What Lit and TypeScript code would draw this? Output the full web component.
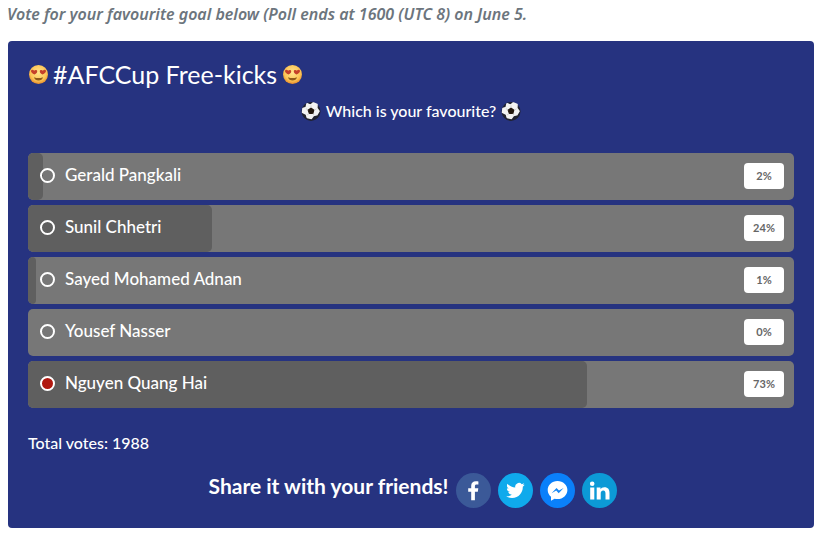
import { LitElement, html, css, svg } from "lit";
import { customElement, state } from "lit/decorators.js";

interface Option {
  name: string;
  percent: number;
}

const OPTIONS: Option[] = [
  { name: "Gerald Pangkali", percent: 2 },
  { name: "Sunil Chhetri", percent: 24 },
  { name: "Sayed Mohamed Adnan", percent: 1 },
  { name: "Yousef Nasser", percent: 0 },
  { name: "Nguyen Quang Hai", percent: 73 },
];

const heartEyes = html`<svg class="emoji" viewBox="0 0 20 20" aria-hidden="true">
  <defs>
    <radialGradient id="face" cx="50%" cy="40%" r="60%">
      <stop offset="0" stop-color="#ffe58e" />
      <stop offset="0.7" stop-color="#fcc556" />
      <stop offset="1" stop-color="#e88b2a" />
    </radialGradient>
  </defs>
  <circle cx="10.5" cy="10.5" r="9.5" fill="url(#face)" />
  <path d="M6.4 10.6 C4.4 9.4 2.7 8.2 3 6.8 C3.4 5.5 5.4 5.6 6.1 6.8 C7.2 5.6 9.2 6 9.2 7.4 C9.2 8.8 7.8 9.8 6.4 10.6Z" fill="#c5402a" />
  <path d="M14.6 10.6 C16.6 9.4 18.3 8.2 18 6.8 C17.6 5.5 15.6 5.6 14.9 6.8 C13.8 5.6 11.8 6 11.8 7.4 C11.8 8.8 13.2 9.8 14.6 10.6Z" fill="#c5402a" />
  <path d="M6 13.2 Q10.5 15 15 13.2 Q14 16.4 10.5 16.4 Q7 16.4 6 13.2Z" fill="#8f5a1a" />
</svg>`;

const ball = html`<svg class="emoji" viewBox="0 0 20 20" aria-hidden="true">
  <circle cx="10" cy="10.4" r="9.5" fill="#20222f" />
  <path
    d="M9.6 4.2 L12.4 2 L16 3.6 L15.8 7.2 L18 10.2 L15.8 13.8 L12.6 14.4 L10.4 17.4 L6.2 16.4 L5.4 13.4 L1.6 11.4 L2 7.4 L5.2 6.4 L6 2.8Z"
    fill="#f3f3f3"
    stroke="#f3f3f3"
    stroke-width="1.6"
    stroke-linejoin="round"
  />
  <path d="M10 7.4 L12.6 9.2 L11.8 12.2 L8.4 12.2 L7.4 9.2Z" fill="#24190f" stroke="#24190f" stroke-width="1.4" stroke-linejoin="round" />
  <path d="M10 7 V4.4 M13 9.2 L15.4 8 M12 12.4 L13 14.2 M8.2 12.4 L6 14 M7.2 9.2 L4.8 7.4" stroke="#b9b9b9" stroke-width="0.6" fill="none" />
</svg>`;

const NETWORKS = [
  {
    id: "facebook",
    label: "Facebook",
    glyph: svg`<path d="M18.9 27.2V18.7H21.8L22.3 15.2H18.9V13.1C18.9 12 19.4 11.4 20.7 11.4H22.4V8.4C21.9 8.3 20.9 8.2 19.9 8.2C17 8.2 15.2 9.8 15.2 12.7V15.2H12.2V18.7H15.2V27.2Z" fill="#fff"/>`,
  },
  {
    id: "twitter",
    label: "Twitter",
    glyph: svg`<path transform="translate(8.2 8.2) scale(.77)" d="M23.95 4.57a10 10 0 0 1-2.82.77 4.96 4.96 0 0 0 2.16-2.72c-.95.55-2 .96-3.13 1.18a4.92 4.92 0 0 0-8.38 4.48C7.69 8.1 4.07 6.13 1.64 3.16a4.82 4.82 0 0 0-.67 2.48c0 1.71.87 3.21 2.19 4.1a4.9 4.9 0 0 1-2.23-.62v.06a4.92 4.92 0 0 0 3.95 4.83 5 5 0 0 1-2.21.08 4.94 4.94 0 0 0 4.6 3.42A9.87 9.87 0 0 1 0 19.54a14 14 0 0 0 7.55 2.21c9.05 0 14-7.5 14-13.98 0-.21 0-.42-.02-.63a9.94 9.94 0 0 0 2.42-2.57z" fill="#fff"/>`,
  },
  {
    id: "messenger",
    label: "Messenger",
    glyph: svg`<path d="M17.5 8C11.9 8 7.7 12 7.7 17C7.7 19.8 9 22.2 11 23.8V27.8L14.6 25.7C15.5 26 16.5 26.1 17.5 26.1C23.1 26.1 27.4 22.1 27.4 17C27.4 12 23.1 8 17.5 8Z" fill="#fff"/><path d="M11.6 20.2L16.5 15L19 17.6L23.6 15L18.7 20.2L16.2 17.6Z" fill="#1587f5"/>`,
  },
  {
    id: "linkedin",
    label: "LinkedIn",
    glyph: svg`<path d="M8.2 14.6H12.3V26.5H8.2ZM10.2 8.5A2.3 2.3 0 1 1 10.2 13.1A2.3 2.3 0 1 1 10.2 8.5ZM14.7 14.6H18.5V16.2C19.2 15.1 20.5 14.3 22.3 14.3C26.2 14.3 27.5 16.6 27.5 20.1V26.5H23.5V20.8C23.5 19 23.1 17.6 21.2 17.6C19.4 17.6 18.7 18.9 18.7 20.7V26.5H14.7Z" fill="#fff"/>`,
  },
];

@customElement("app-root")
export class AppRoot extends LitElement {
  @state() private selected = 4;

  static styles = css`
    :host {
      display: block;
      font-family: Lato, "Liberation Sans", sans-serif;
      font-weight: 500;
      color: #fff;
    }
    * {
      box-sizing: border-box;
    }
    .intro {
      margin: 0;
      padding: 4px 7px 17px;
      font: italic 600 16px/20px "Noto Sans", sans-serif;
      color: #6c757d;
    }
    .card {
      margin: 0 10px 9px 8px;
      padding: 20px;
      border-radius: 4px;
      background: #263380;
    }
    .title {
      display: flex;
      align-items: center;
      gap: 5px;
      margin: 0;
      font-size: 25px;
      font-weight: 400;
      line-height: 26px;
    }
    .question {
      display: flex;
      align-items: center;
      justify-content: center;
      gap: 5px;
      margin: 14px 0 32px;
      font-size: 16px;
      line-height: 20px;
    }
    .emoji {
      width: 20px;
      height: 20px;
      flex: none;
    }
    .options {
      display: grid;
      gap: 5px;
      margin: 0;
      padding: 0;
      border: 0;
    }
    .option {
      position: relative;
      display: flex;
      align-items: center;
      gap: 10px;
      height: 47px;
      padding: 0 10px 2px 12px;
      border-radius: 5px;
      background: #777;
      overflow: hidden;
      cursor: pointer;
    }
    .fill {
      position: absolute;
      inset: 0 auto 0 0;
      border-radius: 5px;
      background: #5f5f5f;
    }
    .radio {
      appearance: none;
      position: relative;
      flex: none;
      width: 15px;
      height: 15px;
      margin: 0;
      border: 2px solid #fff;
      border-radius: 50%;
    }
    .radio:checked {
      background: #b01810;
    }
    .name {
      position: relative;
      flex: 1;
      padding-bottom: 2px;
      font-size: 17px;
      line-height: 22px;
    }
    .percent {
      position: relative;
      width: 40px;
      border-radius: 4px;
      background: #fff;
      color: #666;
      font-size: 11px;
      font-weight: 700;
      line-height: 26px;
      text-align: center;
    }
    .total {
      margin: 25px 0 20px;
      font-size: 16px;
      line-height: 20px;
    }
    .share {
      display: flex;
      flex-wrap: wrap;
      align-items: center;
      justify-content: center;
      gap: 8px;
      padding-left: 4px;
    }
    .share-title {
      margin: 0;
      padding-bottom: 10px;
      font-size: 21px;
      font-weight: 700;
      line-height: 24px;
    }
    .links {
      display: flex;
      gap: 7px;
    }
    .link {
      display: block;
      width: 35px;
      height: 35px;
      border-radius: 50%;
    }
    .link svg {
      display: block;
    }
    .facebook {
      background: #3b5998;
    }
    .twitter {
      background: #0faaec;
    }
    .messenger {
      background: #0a80fa;
    }
    .linkedin {
      background: #0c9ad6;
    }
  `;

  render() {
    return html`
      <p class="intro">Vote for your favourite goal below (Poll ends at 1600 (UTC 8) on June 5.</p>
      <main class="card">
        <h1 class="title">${heartEyes}<span>#AFCCup Free-kicks</span>${heartEyes}</h1>
        <p class="question" id="question">${ball}<span>Which is your favourite?</span>${ball}</p>
        <fieldset class="options" aria-labelledby="question">
          ${OPTIONS.map(
            (option, i) => html`<label class="option">
              <span class="fill" style="width:${option.percent}%"></span>
              <input
                class="radio"
                type="radio"
                name="goal"
                .checked=${this.selected === i}
                @change=${() => (this.selected = i)}
              />
              <span class="name">${option.name}</span>
              <span class="percent">${option.percent}%</span>
            </label>`
          )}
        </fieldset>
        <p class="total">Total votes: 1988</p>
        <div class="share">
          <h2 class="share-title">Share it with your friends!</h2>
          <nav class="links" aria-label="Share">
            ${NETWORKS.map(
              (n) => html`<a class="link ${n.id}" href="#${n.id}" aria-label=${n.label}
                ><svg width="35" height="35" viewBox="0 0 35 35" aria-hidden="true">${n.glyph}</svg></a
              >`
            )}
          </nav>
        </div>
      </main>
    `;
  }
}
